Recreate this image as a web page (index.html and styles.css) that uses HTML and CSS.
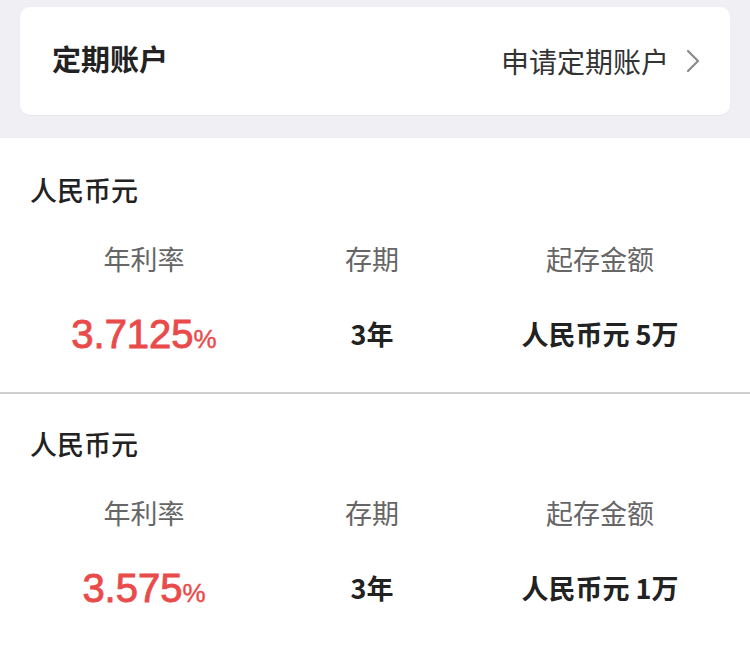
FILE: index.html
```html
<!DOCTYPE html>
<html>
<head>
    <meta charset="utf-8">
    <link rel="stylesheet" href="styles.css">
</head>
<body>
    <div class="top">
        <div class="card">
            <div class="card-title">定期账户</div>
            <div class="card-link">
                <span>申请定期账户</span>
                <svg class="chevron" width="14" height="24" viewBox="0 0 14 24">
                    <polyline points="2,2 12,12 2,22" fill="none" stroke="#8a8a8a" stroke-width="2.2" stroke-linecap="round" stroke-linejoin="round"/>
                </svg>
            </div>
        </div>
    </div>

    <div class="product">
        <div class="currency">人民币元</div>
        <div class="grid">
            <div class="label">年利率</div>
            <div class="label">存期</div>
            <div class="label">起存金额</div>
            <div class="value rate">3.7125<span class="pct">%</span></div>
            <div class="value">3年</div>
            <div class="value">人民币元 5万</div>
        </div>
    </div>

    <div class="product">
        <div class="currency">人民币元</div>
        <div class="grid">
            <div class="label">年利率</div>
            <div class="label">存期</div>
            <div class="label">起存金额</div>
            <div class="value rate">3.575<span class="pct">%</span></div>
            <div class="value">3年</div>
            <div class="value">人民币元 1万</div>
        </div>
    </div>
</body>
</html>
```

FILE: styles.css
```css
body {
    margin: 0;
    background: #fff;
    font-family: "Noto Sans CJK SC", "Noto Sans", sans-serif;
    color: #222;
}

.top {
    background: #efeff4;
    padding: 7px 20px 23px;
}

.card {
    background: #fff;
    border-radius: 10px;
    height: 108px;
    padding: 0 30px 0 32px;
    display: flex;
    align-items: center;
    justify-content: space-between;
    box-shadow: 0 1px 1px rgba(0, 0, 0, 0.04);
}

.card-title {
    font-size: 29px;
    font-weight: 700;
    color: #222;
    margin-bottom: 6px;
}

.card-link {
    display: flex;
    align-items: center;
    font-size: 28px;
    color: #333;
}

.chevron {
    margin-left: 17px;
}

.product {
    padding: 34px 36px 28px 30px;
    border-bottom: 2px solid #cfcfcf;
}

.product + .product {
    padding-top: 32px;
}

.product:last-child {
    border-bottom: none;
}

.currency {
    font-size: 27px;
    font-weight: 500;
    line-height: 36px;
    color: #222;
}

.grid {
    display: grid;
    grid-template-columns: repeat(3, 1fr);
    row-gap: 32px;
    margin-top: 33px;
    text-align: center;
}

.label {
    font-size: 27px;
    line-height: 36px;
    color: #666;
}

.value {
    font-size: 27px;
    font-weight: 600;
    line-height: 50px;
    color: #222;
}

.rate {
    font-family: "Liberation Sans", Arial, sans-serif;
    font-size: 40px;
    font-weight: 400;
    color: #e94b4b;
    -webkit-text-stroke: 0.9px #e94b4b;
}

.pct {
    font-size: 26px;
    -webkit-text-stroke: 0.4px #e94b4b;
}
```
